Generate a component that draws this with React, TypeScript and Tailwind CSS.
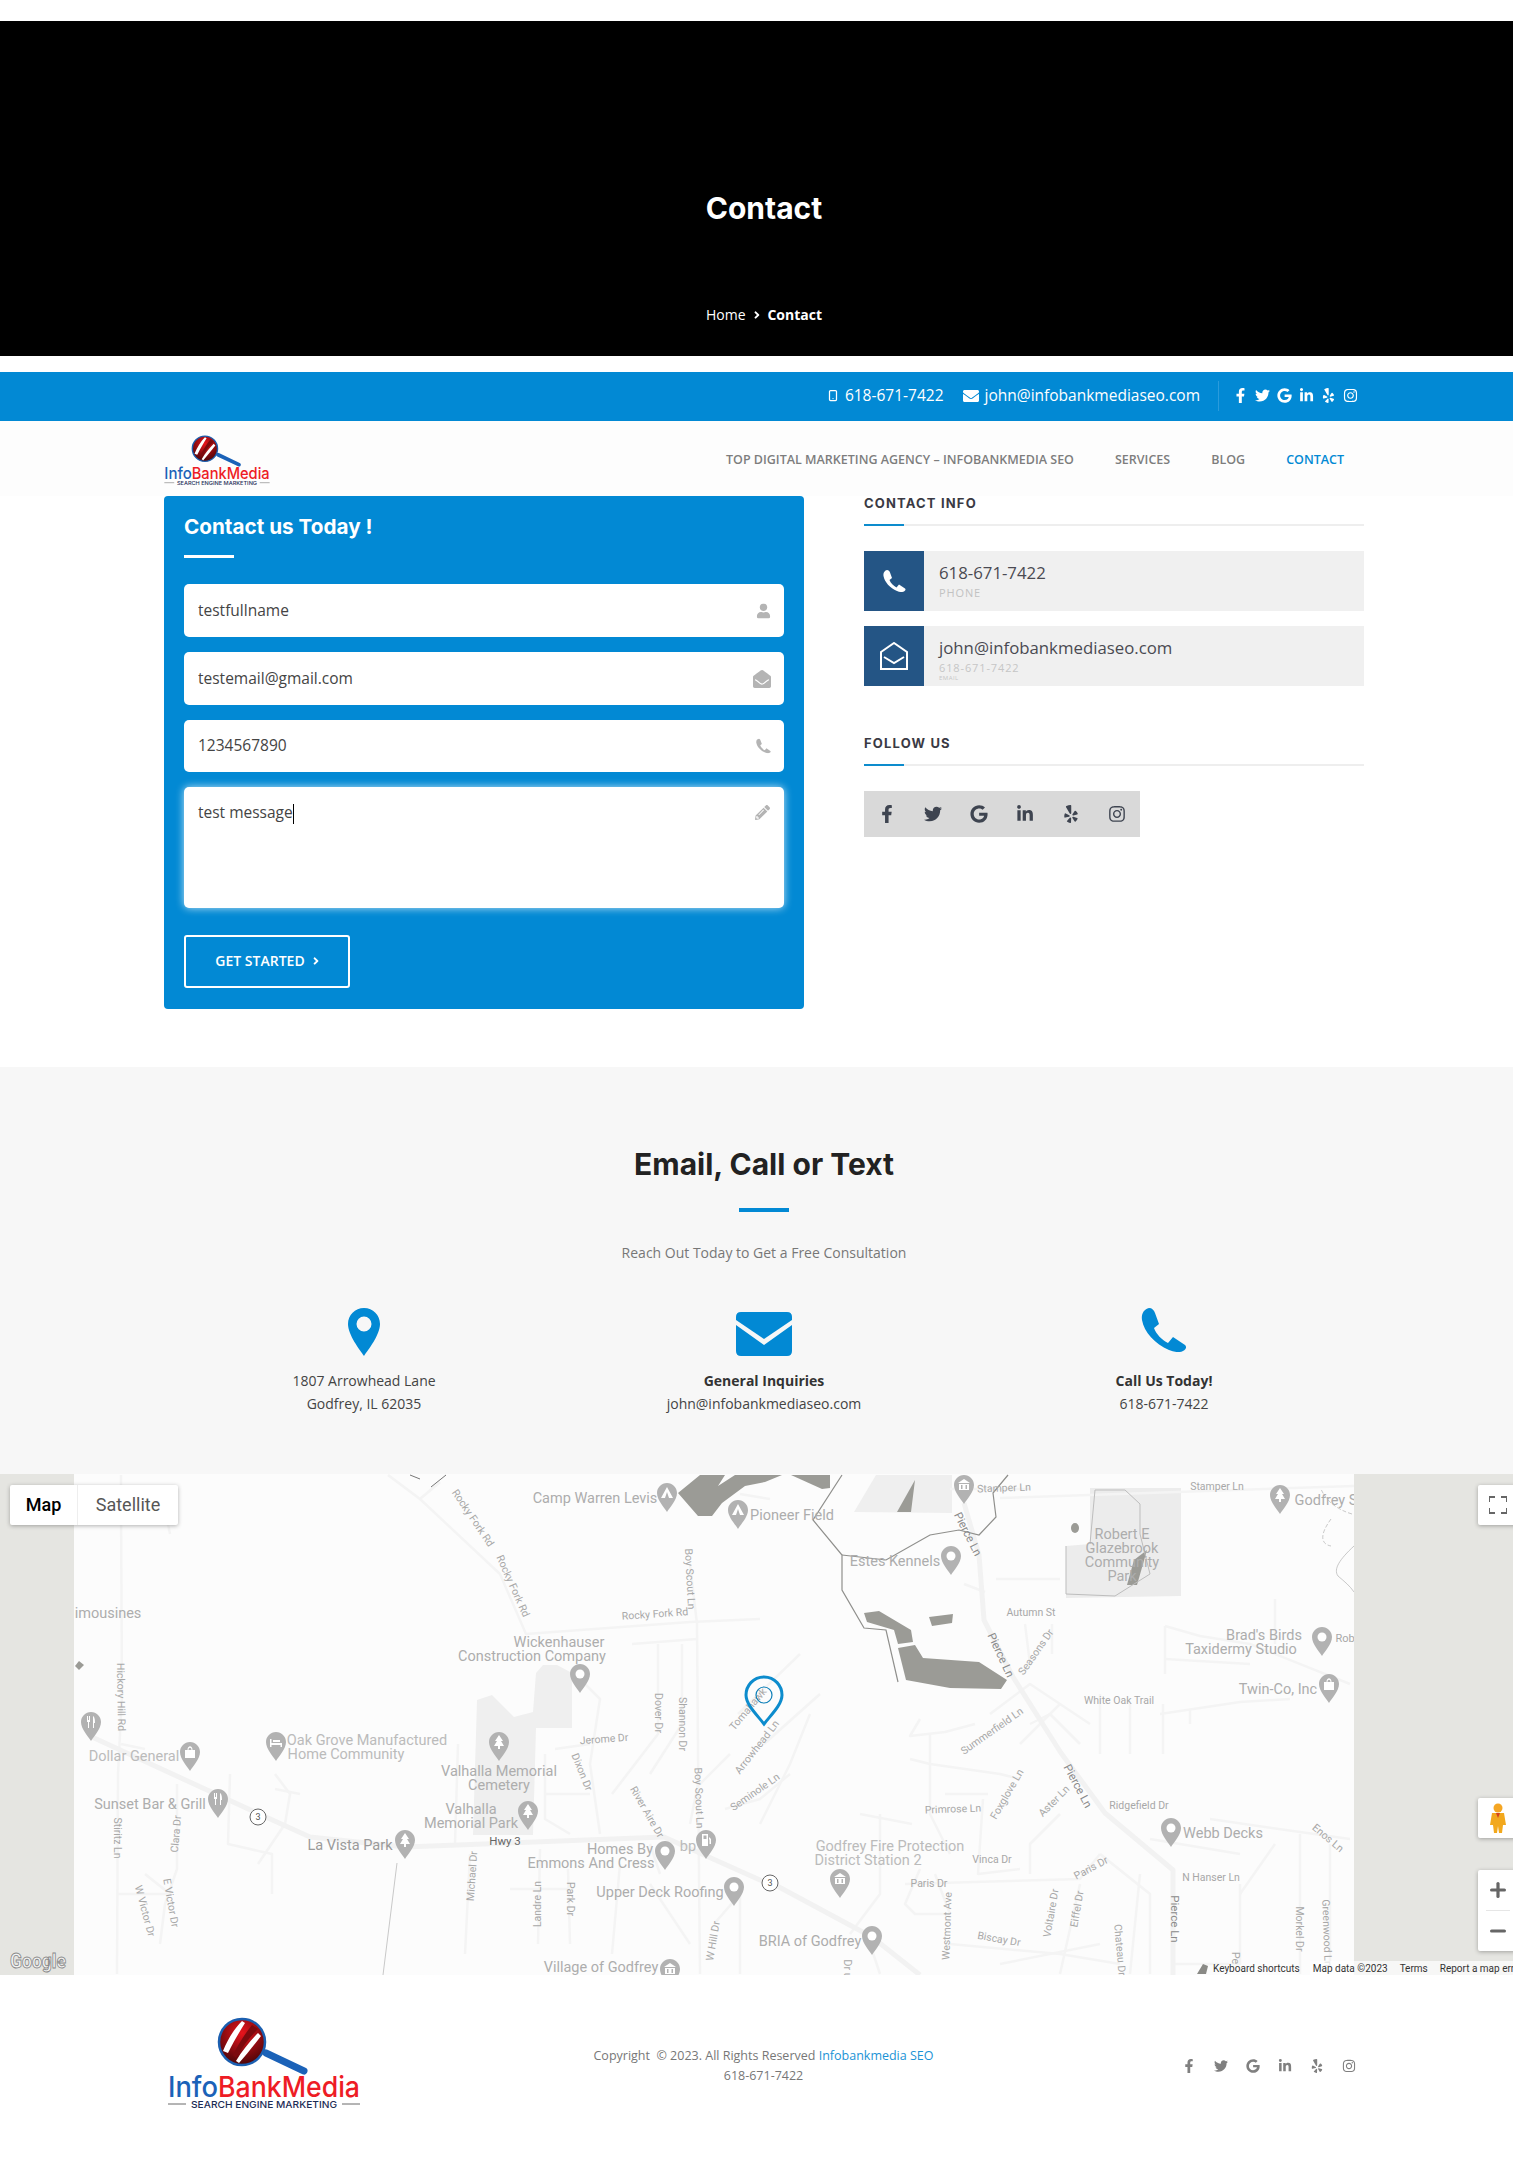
import { FaFacebookF, FaTwitter, FaGoogle, FaLinkedinIn, FaYelp, FaInstagram, FaEnvelope, FaUser, FaEnvelopeOpen, FaPencilAlt, FaAngleRight } from "react-icons/fa";
import { Smartphone, Plus, Minus } from "lucide-react";

const SOFT = { fontFamily: '"Open Sans", sans-serif' };
const HEAD = { fontFamily: 'Inter, sans-serif' };

function Handset({ className }: { className?: string }) {
  return (
    <svg viewBox="0 0 46 44" className={className} fill="currentColor">
      <path d="M8 0C11 0 13 2 14 5L18 16L13 20C15 26 21 32 27 35L32 29L44 37C46 39 45 41 42 43C38 45 33 44 28 42C14 36 3 24 1 12C0 6 3 1 8 0Z" />
    </svg>
  );
}

function Logo({ className, id }: { className?: string; id: string }) {
  return (
    <svg viewBox="0 0 192 93" className={className}>
      <defs>
        <radialGradient id={id} cx="50%" cy="30%" r="75%">
          <stop offset="0%" stopColor="#e8141c" />
          <stop offset="100%" stopColor="#3f0406" />
        </radialGradient>
      </defs>
      <line x1="98" y1="36" x2="136" y2="54" stroke="#1b62b8" strokeWidth="7" strokeLinecap="round" />
      <circle cx="74" cy="25" r="23" fill={`url(#${id})`} stroke="#1b5fb0" strokeWidth="2.5" />
      <path d="M55 34C60 22 66 12 74 4L77 6C72 14 66 24 60 36Z M68 44C74 34 82 24 90 16L93 19C86 28 78 38 71 46Z" fill="#fff" />
      <path d="M65 38C70 28 76 18 84 8L90 12C82 20 74 30 68 41Z" fill="#7c0a0e" />
      <text x="0" y="80" fontSize="29" fontFamily="Inter, sans-serif" fontWeight="500" fill="#1b62b8" textLength="50" lengthAdjust="spacingAndGlyphs">Info</text>
      <text x="50" y="80" fontSize="29" fontFamily="Inter, sans-serif" fontWeight="500" fill="#ee1c25" textLength="142" lengthAdjust="spacingAndGlyphs">BankMedia</text>
      <line x1="0" y1="87" x2="18" y2="87" stroke="#444" strokeWidth="0.8" />
      <line x1="174" y1="87" x2="192" y2="87" stroke="#444" strokeWidth="0.8" />
      <text x="23" y="91" fontSize="9.5" fontFamily="Inter, sans-serif" fontWeight="500" fill="#1c2c55" textLength="146" lengthAdjust="spacingAndGlyphs">SEARCH ENGINE MARKETING</text>
    </svg>
  );
}

const poi = "#adadad";
const st = "#a8a8a8";
type Lb = [string, number, number, number?, number?, string?];
const labels: Lb[] = [
  ["Camp Warren Levis", 595, 24, 0, 14.5, poi],
  ["Pioneer Field", 792, 41, 0, 14.5, poi],
  ["Rocky Fork Rd", 473, 44, 56, 10.5, st],
  ["Rocky Fork Rd", 513, 112, 66, 10.5, st],
  ["Boy Scout Ln", 690, 105, 87, 10.5, st],
  ["Rocky Fork Rd", 655, 140, -4, 10.5, st],
  ["Wickenhauser", 559, 168, 0, 14.5, poi],
  ["Construction Company", 532, 182, 0, 14.5, poi],
  ["Hickory Hill Rd", 121, 223, 89, 10.5, st],
  ["imousines", 108, 139, 0, 14.5, poi],
  ["Dover Dr", 658, 239, 90, 10.5, st],
  ["Shannon Dr", 682, 250, 90, 10.5, st],
  ["Jerome Dr", 604, 265, -4, 10.5, st],
  ["Dixon Dr", 582, 298, 68, 10.5, st],
  ["Oak Grove Manufactured", 367, 266, 0, 14.5, "#bbbbbb"],
  ["Home Community", 346, 280, 0, 14.5, "#bbbbbb"],
  ["Valhalla Memorial", 499, 297, 0, 14.5, poi],
  ["Cemetery", 499, 311, 0, 14.5, poi],
  ["Valhalla", 471, 335, 0, 14.5, poi],
  ["Memorial Park", 471, 349, 0, 14.5, poi],
  ["Dollar General", 134, 282, 0, 14.5, "#bbbbbb"],
  ["Sunset Bar & Grill", 150, 330, 0, 14.5, poi],
  ["La Vista Park", 350, 371, 0, 14.5, "#9a9a9a"],
  ["Hwy 3", 505, 367, 0, 11.5, "#666"],
  ["Homes By", 620, 375, 0, 14.5, poi],
  ["Emmons And Cress", 591, 389, 0, 14.5, poi],
  ["Upper Deck Roofing", 660, 418, 0, 14.5, poi],
  ["Village of Godfrey", 601, 493, 0, 14.5, poi],
  ["bp", 688, 372, 0, 14.5, "#bbbbbb"],
  ["Boy Scout Ln", 699, 324, 88, 10.5, st],
  ["River Aire Dr", 647, 338, 60, 10.5, st],
  ["Michael Dr", 472, 402, -86, 10.5, st],
  ["Landre Ln", 537, 430, -90, 10.5, st],
  ["Park Dr", 570, 425, 90, 10.5, st],
  ["Stiritz Ln", 117, 364, 90, 10.5, st],
  ["Clara Dr", 176, 360, -85, 10.5, st],
  ["W Victor Dr", 145, 437, 75, 10.5, st],
  ["E Victor Dr", 171, 429, 80, 10.5, st],
  ["W Hill Dr", 713, 467, -80, 10.5, st],
  ["Tomahawk", 748, 235, -50, 10.5, st],
  ["Arrowhead Ln", 757, 273, -52, 10.5, st],
  ["Seminole Ln", 755, 318, -35, 10.5, st],
  ["Stamper Ln", 1004, 14, -2, 10.5, st],
  ["Stamper Ln", 1217, 12, 0, 10.5, st],
  ["Pierce Ln", 968, 60, 63, 11.5, "#8a8a8a"],
  ["Estes Kennels", 895, 87, 0, 14.5, poi],
  ["Robert E", 1122, 60, 0, 14.5, poi],
  ["Glazebrook", 1122, 74, 0, 14.5, poi],
  ["Community", 1122, 88, 0, 14.5, poi],
  ["Park", 1122, 102, 0, 14.5, poi],
  ["Godfrey S", 1326, 26, 0, 14.5, poi],
  ["Autumn St", 1031, 138, 0, 10.5, st],
  ["Seasons Dr", 1036, 178, -55, 10.5, st],
  ["Pierce Ln", 1001, 181, 65, 11.5, "#8a8a8a"],
  ["Brad's Birds", 1264, 161, 0, 14.5, poi],
  ["Taxidermy Studio", 1241, 175, 0, 14.5, poi],
  ["Rob", 1345, 164, 0, 11, st],
  ["Twin-Co, Inc", 1278, 215, 0, 14.5, poi],
  ["White Oak Trail", 1119, 226, 0, 10.5, st],
  ["Summerfield Ln", 992, 257, -35, 10.5, st],
  ["Pierce Ln", 1078, 312, 62, 11.5, "#8a8a8a"],
  ["Ridgefield Dr", 1139, 331, 0, 10.5, st],
  ["Primrose Ln", 953, 335, -2, 10.5, st],
  ["Foxglove Ln", 1007, 320, -60, 10.5, st],
  ["Aster Ln", 1054, 327, -45, 10.5, st],
  ["Webb Decks", 1223, 359, 0, 14.5, poi],
  ["Enos Ln", 1328, 364, 40, 10.5, st],
  ["Godfrey Fire Protection", 890, 372, 0, 14.5, "#bbbbbb"],
  ["District Station 2", 868, 386, 0, 14.5, "#bbbbbb"],
  ["Vinca Dr", 992, 385, 0, 10.5, st],
  ["Paris Dr", 929, 409, 0, 10.5, st],
  ["Paris Dr", 1091, 394, -28, 10.5, st],
  ["N Hanser Ln", 1211, 403, 0, 10.5, st],
  ["Pierce Ln", 1175, 445, 90, 11.5, "#8a8a8a"],
  ["Westmont Ave", 947, 452, -88, 10.5, st],
  ["Voltaire Dr", 1051, 439, -80, 10.5, st],
  ["Eiffel Dr", 1077, 435, -80, 10.5, st],
  ["Chateau Dr", 1120, 476, 85, 10.5, st],
  ["Biscay Dr", 999, 465, 10, 10.5, st],
  ["BRIA of Godfrey", 810, 467, 0, 14.5, poi],
  ["Morkel Dr", 1299, 455, 90, 10.5, st],
  ["Greenwood Ln", 1327, 459, 88, 10.5, st],
  ["Pe", 1235, 484, 90, 10.5, st],
  ["Dr u", 847, 495, 90, 10.5, st],
];

type Kind = "dot" | "tent" | "tree" | "fork" | "bag" | "bld" | "gas" | "bed";
const pins: [number, number, Kind][] = [
  [667, 9, "tent"], [738, 26, "tent"], [580, 190, "dot"], [91, 238, "fork"], [190, 268, "bag"], [218, 315, "fork"], [276, 258, "bed"], [499, 258, "tree"], [528, 327, "tree"], [405, 356, "tree"], [665, 367, "dot"], [706, 356, "gas"], [734, 403, "dot"], [670, 485, "bld"], [964, 1, "bld"], [1280, 11, "tree"], [951, 72, "dot"], [1322, 153, "dot"], [1329, 200, "bag"], [1171, 344, "dot"], [840, 395, "bld"], [872, 452, "dot"],
];

function Glyph({ kind }: { kind: Kind }) {
  const w = "#ffffff";
  if (kind === "dot") return <circle cx="10" cy="10" r="4.5" fill={w} />;
  if (kind === "tent") return <path d="M10 4L16 15H4ZM10 9L8 15H12Z" fill={w} fillRule="evenodd" />;
  if (kind === "tree") return <path d="M10 3L14 9H12L15 14H11V17H9V14H5L8 9H6Z" fill={w} />;
  if (kind === "fork") return <path d="M6 4H7V8H8V4H9V10H8V16H7V10H6ZM12 4C14 5 14 9 14 11H13V16H12Z" fill={w} />;
  if (kind === "bag") return <path d="M5 8H15V16H5ZM7.5 8C7.5 3 12.5 3 12.5 8H11.5C11.5 5 8.5 5 8.5 8Z" fill={w} />;
  if (kind === "bld") return <path d="M10 4L16 8H4ZM5 9H15V15H5ZM7 10V14H8.5V10ZM11.5 10V14H13V10Z" fill={w} fillRule="evenodd" />;
  if (kind === "gas") return <path d="M6 4H12V16H6ZM7.5 5.5V9H10.5V5.5ZM13 7L15 9V14H13.5V10L13 9Z" fill={w} fillRule="evenodd" />;
  return <path d="M4 7H5.5V11H16V15H14.5V13H5.5V15H4ZM7 8H14V10H7Z" fill={w} />;
}

const roadsMain = [
  "92,263 257,339 310,363 405,373 664,363 760,406 779,413 872,463 920,501",
  "964,29 979,81 984,146 1013,203 1061,279 1105,339 1173,396 1173,501",
];
const roads = [
  "121,1 121,30 122,220 118,300 117,500",
  "125,30 165,35 170,60",
  "121,270 145,275",
  "388,1 420,25 440,8",
  "420,25 500,100 526,160 690,148 760,145",
  "690,90 697,150 699,400 700,500",
  "632,170 697,165",
  "658,170 658,260 612,320",
  "682,170 682,250 650,300",
  "585,210 600,225 590,290 600,360",
  "555,275 590,270",
  "545,280 545,345 570,360",
  "545,320 590,320",
  "230,300 228,370 272,380 272,420",
  "177,310 177,395 165,430 160,470",
  "117,420 170,420 145,400",
  "275,300 290,320 285,350 258,390",
  "275,315 300,320",
  "458,270 455,370",
  "470,380 465,480",
  "510,415 570,415",
  "540,375 538,470",
  "568,395 570,470",
  "620,390 612,480",
  "650,370 660,400",
  "730,280 700,310",
  "700,300 690,350",
  "725,335 760,325 790,300",
  "738,240 800,180",
  "764,270 820,220",
  "810,240 790,290 760,350",
  "714,450 740,420 740,500",
  "650,410 690,470",
  "996,105 1060,105",
  "1025,150 1030,190",
  "1052,150 1052,180",
  "990,240 1030,210 1060,230 1020,270",
  "1030,250 1050,240 1080,270",
  "1060,230 1090,250",
  "1165,152 1165,200",
  "1165,152 1200,162 1250,170 1350,210",
  "1165,185 1250,190",
  "1275,125 1275,170",
  "1160,240 1240,228 1290,225",
  "1100,220 1100,280",
  "1130,230 1130,280",
  "1163,230 1163,280",
  "1190,235 1190,250",
  "920,245 910,262 945,258 975,250",
  "930,260 930,340 950,380",
  "910,285 930,290 1000,300 1020,305",
  "912,350 860,340",
  "945,320 988,320",
  "983,325 978,400 1020,395",
  "1060,340 1030,370 1030,400",
  "880,340 880,420 850,460",
  "920,395 905,430 915,440 950,440 935,400",
  "905,410 1080,405 1100,380",
  "1080,410 1060,500",
  "1140,400 1130,500",
  "1100,380 1150,420 1150,500",
  "950,470 1060,480 1120,490",
  "1000,490 1100,470",
  "1210,345 1300,358 1350,365",
  "1275,370 1240,420",
  "1300,360 1300,500",
  "1330,370 1330,500",
  "1240,410 1240,490 1175,490",
  "1150,365 1240,380",
  "870,470 880,500",
  "740,20 770,25",
  "964,110 985,118",
  "1000,24 1354,12",
  "950,15 1030,15",
];
const slivers = [
  "678,19 700,1 725,1 718,12 735,1 782,1 765,8 745,12 722,29 712,42 698,42",
  "791,1 830,1 830,14 822,15",
  "915,6 911,38 897,38",
  "1147,76 1137,111 1127,111 1134,86",
  "864,139 879,137 911,156 913,168 898,170 894,156 867,148",
  "898,174 915,171 923,184 979,188 1007,206 1001,215 950,214 906,206",
  "929,143 953,140 952,149 932,152",
  "79,187 84,191 79,196 75,192",
];

function MapDrawing() {
  return (
    <svg viewBox="0 0 1513 501" className="block w-full h-[501px]" style={{ fontFamily: "Roboto, sans-serif" }}>
      <rect width="1513" height="501" fill="#fcfcfc" />
      <polygon points="473,361 477,226 492,221 514,243 533,238 536,199 543,191 557,191 572,199 572,254 536,254 533,361" fill="#efefef" />
      <polygon points="876,1 952,1 952,39 854,38" fill="#efefef" />
      <polygon points="1090,14 1181,14 1181,122 1066,124 1066,72 1090,70" fill="#ececec" />
      {roads.map((p, i) => (
        <polyline key={i} points={p} fill="none" stroke="#f4f4f4" strokeWidth="2.5" strokeLinejoin="round" />
      ))}
      {roadsMain.map((p, i) => (
        <polyline key={i} points={p} fill="none" stroke="#f2f2f2" strokeWidth="5" strokeLinejoin="round" />
      ))}
      {slivers.map((p, i) => (
        <polygon key={i} points={p} fill="#9b9b96" />
      ))}
      <ellipse cx="1075" cy="54" rx="4" ry="5" fill="#9b9b96" />
      <polyline points="842,1 813,46 842,81 842,116 864,154 886,156 898,208" fill="none" stroke="#8f8f8c" strokeWidth="1.2" />
      <polyline points="842,81 886,86 930,61 959,56 979,61 996,43 993,19 1008,1" fill="none" stroke="#8f8f8c" strokeWidth="1.2" />
      <polyline points="1066,72 1066,120 1115,122 1150,100 1140,60 1140,30 1125,16 1095,16 1090,70" fill="none" stroke="#bdbdbd" strokeWidth="1" />
      <polyline points="397,389 383,501" fill="none" stroke="#c8c8c8" strokeWidth="1" />
      <polyline points="410,1 420,5" fill="none" stroke="#777" strokeWidth="1" />
      <polyline points="446,1 431,13" fill="none" stroke="#777" strokeWidth="1" />
      <path d="M1331 45C1320 60 1320 70 1331 72M1352 40C1335 35 1325 25 1321 15" fill="none" stroke="#bbb" strokeWidth="0.8" strokeDasharray="4 2" />
      <path d="M1354 72C1340 85 1333 95 1338 102C1345 108 1350 112 1354 118" fill="none" stroke="#bbb" strokeWidth="0.8" />
      {labels.map(([t, x, y, r = 0, s = 10.5, c = st], i) => (
        <text key={i} x={x} y={y} fontSize={s} fill={c} textAnchor="middle" dominantBaseline="central" transform={r ? `rotate(${r} ${x} ${y})` : undefined}>
          {t}
        </text>
      ))}
      {pins.map(([x, y, kind], i) => (
        <g key={i} transform={`translate(${x - 10} ${y})`}>
          <path d="M10 0C4.5 0 0 4.5 0 10C0 17 7 24 10 29C13 24 20 17 20 10C20 4.5 15.5 0 10 0Z" fill="#b2b2b2" />
          <Glyph kind={kind} />
        </g>
      ))}
      {[[258, 343], [770, 409]].map(([x, y], i) => (
        <g key={i}>
          <circle cx={x} cy={y} r="8" fill="#fff" stroke="#666" strokeWidth="1" />
          <text x={x} y={y} fontSize="9" textAnchor="middle" dominantBaseline="central" fill="#555">3</text>
        </g>
      ))}
      <path d="M764 203C753 203 746 212 746 221C746 231 758 242 764 250C770 242 782 231 782 221C782 212 775 203 764 203Z" fill="none" stroke="#0d8ccd" strokeWidth="3" />
      <circle cx="764" cy="221" r="8" fill="none" stroke="#0d7fb8" strokeWidth="1.2" />
      <rect x="0" width="74" height="501" fill="#e5e5e1" />
      <rect x="1354" width="159" height="501" fill="#e5e5e1" />
      <text x="10" y="494" fontSize="20" fontWeight="700" fill="#f4f4f4" stroke="#8a8a8a" strokeWidth="0.9" textLength="56" lengthAdjust="spacingAndGlyphs">Google</text>
      <path d="M1197 500L1203 490L1208 492L1206 500Z" fill="#8a8a86" />
    </svg>
  );
}

function Social({ className }: { className: string }) {
  return (
    <>
      <FaFacebookF className={className} />
      <FaTwitter className={className} />
      <FaGoogle className={className} />
      <FaLinkedinIn className={className} />
      <FaYelp className={className} />
      <FaInstagram className={className} />
    </>
  );
}

function Field({ value, icon, h = "h-[53px]" }: { value: string; icon: React.ReactNode; h?: string }) {
  return (
    <div className={`relative ${h} bg-white rounded-[5px]`}>
      <input readOnly value={value} className="w-full h-full bg-transparent pl-[14px] pr-10 pb-[2px] text-[15.5px] text-[#444] outline-none" style={SOFT} />
      <span className="absolute right-[13px] top-1/2 -translate-y-1/2 text-[#b4b4b4]">{icon}</span>
    </div>
  );
}

function Heading({ children }: { children: string }) {
  return (
    <div>
      <h4 className="text-[13px] font-bold tracking-[0.09em] text-[#3a3a44] uppercase leading-[20px]" style={HEAD}>{children}</h4>
      <div className="mt-[11px] h-[2px] bg-[#eeeeee]">
        <div className="w-10 h-[2px] bg-[#0d8ccd]" />
      </div>
    </div>
  );
}

export default function App() {
  return (
    <div className="w-full h-[2157px] bg-white overflow-hidden" style={SOFT}>
      <div className="h-[21px]" />
      <section className="h-[335px] bg-black flex flex-col items-center pl-[15px] pt-[169px] text-white">
        <h1 className="text-[30px] leading-[36px] font-bold" style={HEAD}>Contact</h1>
        <div className="mt-[79px] flex items-center text-[14px] leading-[20px] w-[116px] whitespace-nowrap">
          <span>Home</span>
          <FaAngleRight className="mx-[7px] text-[12px]" />
          <span className="font-bold">Contact</span>
        </div>
      </section>
      <div className="h-[16px]" />
      <div className="h-[49px] bg-[#0289d4] flex items-center justify-end pr-[155px] pb-[2px] text-white text-[15.5px]">
        <Smartphone className="w-[12px] h-[17px] mr-[6px]" strokeWidth={2.5} />
        <span>618-671-7422</span>
        <FaEnvelope className="ml-[19px] mr-[6px] text-[16px]" />
        <span>john@infobankmediaseo.com</span>
        <div className="w-px h-[30px] bg-[#2a9bdc] ml-[18px] mr-[14px]" />
        <div className="flex items-center gap-[7px]">
          <Social className="text-[15px] text-white" />
        </div>
      </div>
      <header className="h-[75px] flex items-center pl-[164px] pr-[169px] bg-[#fdfdfd]">
        <Logo id="lens-a" className="w-[106px] h-[51px] mt-[4px]" />
        <nav className="ml-auto pt-[4px] flex items-center gap-[41px] text-[12.5px] font-semibold text-[#7d7d7d] whitespace-nowrap">
          <span>TOP DIGITAL MARKETING AGENCY – INFOBANKMEDIA SEO</span>
          <span>SERVICES</span>
          <span>BLOG</span>
          <span className="text-[#0289d4]">CONTACT</span>
        </nav>
      </header>
      <section className="flex items-start gap-[60px] pl-[164px] h-[571px]">
        <form className="w-[640px] h-[513px] bg-[#0289d4] rounded-[4px] px-5 pt-[17px]">
          <h3 className="text-[20.7px] leading-[28px] font-bold text-white" style={HEAD}>Contact us Today !</h3>
          <div className="w-[50px] h-[3px] bg-white mt-[14px] mb-[26px]" />
          <div className="flex flex-col gap-[15px]">
            <Field value="testfullname" icon={<FaUser className="text-[15px]" />} />
            <Field value="testemail@gmail.com" icon={<FaEnvelopeOpen className="text-[18px]" />} />
            <Field value="1234567890" h="h-[52px]" icon={<Handset className="w-[15px] h-[15px]" />} />
            <div className="relative h-[121px] bg-white rounded-[5px] shadow-[0_0_9px_rgba(255,255,255,0.75)] pl-[14px] pt-[13px] text-[15.5px] leading-[24px] text-[#444]">
              test message<span className="inline-block w-px h-[20px] bg-black align-middle" />
              <FaPencilAlt className="absolute right-[14px] top-[18px] text-[15px] text-[#b4b4b4]" />
            </div>
          </div>
          <div className="mt-[27px] w-[166px] h-[53px] border-2 border-white rounded-[3px] flex items-center justify-center gap-[5px] pl-[3px] pb-[2px] text-white text-[14px] font-semibold">
            GET STARTED <FaAngleRight className="text-[12px]" />
          </div>
        </form>
        <aside className="w-[500px] -mt-[3px]">
          <Heading>CONTACT INFO</Heading>
          <div className="mt-[25px] flex flex-col gap-[15px]">
            <div className="h-[60px] flex bg-[#f0f0f0]">
              <div className="w-[60px] bg-[#245585] flex items-center justify-center text-white">
                <Handset className="w-[23px] h-[22px]" />
              </div>
              <div className="pl-[15px] pt-[9px]">
                <div className="text-[16.8px] leading-[26px] text-[#4a4a52]">618-671-7422</div>
                <div className="text-[11px] leading-[13px] tracking-[0.08em] text-[#c2c2c2]">PHONE</div>
              </div>
            </div>
            <div className="h-[60px] flex bg-[#f0f0f0] overflow-hidden">
              <div className="w-[60px] bg-[#245585] flex items-center justify-center text-white">
                <svg viewBox="0 0 28 28" className="w-[28px] h-[28px]" fill="none" stroke="currentColor" strokeWidth="2">
                  <path d="M1 10L14 1L27 10V27H1Z" />
                  <path d="M4 15L14 21L24 15" />
                </svg>
              </div>
              <div className="pl-[15px] pt-[9px]">
                <div className="text-[16.8px] leading-[26px] text-[#4a4a52]">john@infobankmediaseo.com</div>
                <div className="text-[11px] leading-[13px] tracking-[0.08em] text-[#c6c6c6]">618-671-7422</div>
                <div className="text-[6px] leading-[8px] tracking-[0.08em] text-[#c6c6c6]">EMAIL</div>
              </div>
            </div>
          </div>
          <div className="mt-[47px]">
            <Heading>FOLLOW US</Heading>
          </div>
          <div className="mt-[25px] w-[276px] h-[46px] bg-[#d9d9d9] grid grid-cols-6 place-items-center text-[#3e4450]">
            <Social className="text-[18px]" />
          </div>
        </aside>
      </section>
      <section className="h-[407px] bg-[#f7f7f7] pt-[77px] text-center">
        <div className="pl-[15px]">
          <h2 className="text-[30px] leading-[40px] font-bold text-[#222]" style={HEAD}>Email, Call or Text</h2>
          <div className="mx-auto mt-[24px] w-[50px] h-[4px] bg-[#0289d4]" />
          <p className="mt-[31px] text-[14px] leading-[20px] text-[#777]">Reach Out Today to Get a Free Consultation</p>
        </div>
        <div className="mt-[45px] ml-[164px] w-[1200px] grid grid-cols-3 text-[14px] leading-[23px] text-[#444]">
          <div className="flex flex-col items-center">
            <div className="h-[61px]">
              <svg viewBox="0 0 32 48" className="w-[32px] h-[48px]" fill="#0289d4" fillRule="evenodd">
                <path d="M16 0C7 0 0 7 0 16C0 27 12 42 16 48C20 42 32 27 32 16C32 7 25 0 16 0ZM16 8.5A7.5 7.5 0 1 1 16 23.5A7.5 7.5 0 1 1 16 8.5Z" />
              </svg>
            </div>
            <div>1807 Arrowhead Lane</div>
            <div>Godfrey, IL 62035</div>
          </div>
          <div className="flex flex-col items-center">
            <div className="h-[61px] pt-[4px]">
              <svg viewBox="0 0 56 44" className="w-[56px] h-[44px]" fill="#0289d4">
                <path d="M5 0H51Q56 0 56 5V8L28 27L0 8V5Q0 0 5 0Z" />
                <path d="M0 13L28 33L56 13V39Q56 44 51 44H5Q0 44 0 39Z" />
              </svg>
            </div>
            <div className="font-bold text-[#333]">General Inquiries</div>
            <div>john@infobankmediaseo.com</div>
          </div>
          <div className="flex flex-col items-center">
            <div className="h-[61px]">
              <Handset className="w-[46px] h-[44px] text-[#0289d4]" />
            </div>
            <div className="font-bold text-[#333]">Call Us Today!</div>
            <div>618-671-7422</div>
          </div>
        </div>
      </section>
      <section className="relative h-[501px] overflow-hidden">
        <MapDrawing />
        <div className="absolute left-[10px] top-[11px] h-10 flex bg-white shadow-[0_1px_4px_rgba(0,0,0,0.3)] rounded-[2px] text-[18px] leading-10 text-center" style={{ fontFamily: "Roboto, sans-serif" }}>
          <span className="w-[68px] font-medium text-black border-r border-[#eee]">Map</span>
          <span className="w-[100px] text-[#565656]">Satellite</span>
        </div>
        <div className="absolute left-[1478px] top-[11px] w-10 h-10 bg-white shadow-[0_1px_4px_rgba(0,0,0,0.3)] rounded-[2px] flex items-center pl-[11px]">
          <svg viewBox="0 0 18 18" className="w-[18px] h-[18px]" fill="none" stroke="#666" strokeWidth="2"><path d="M0 6V1H6M12 1H18V6M18 12V17H12M6 17H0V12" /></svg>
        </div>
        <div className="absolute left-[1478px] top-[324px] w-10 h-10 bg-white shadow-[0_1px_4px_rgba(0,0,0,0.3)] rounded-[2px] flex items-center pl-[11px]">
          <svg viewBox="0 0 18 30" className="w-[18px] h-[30px]"><circle cx="9" cy="5" r="4.5" fill="#f5a623" /><path d="M3 10H15L17 22L14 22L13 30H10L9 23L8 30H5L4 22L1 22Z" fill="#f2a81d" /><path d="M7 10L9 15L11 10Z" fill="#d5411d" /></svg>
        </div>
        <div className="absolute left-[1478px] top-[396px] w-10 h-[81px] bg-white shadow-[0_1px_4px_rgba(0,0,0,0.3)] rounded-[2px] flex flex-col text-[#666]">
          <div className="h-10 flex items-center pl-[9px]"><Plus className="w-[22px] h-[22px]" strokeWidth={3.5} /></div>
          <div className="mx-[8px] h-px bg-[#e6e6e6]" />
          <div className="h-10 flex items-center pl-[9px]"><Minus className="w-[22px] h-[22px]" strokeWidth={3.5} /></div>
        </div>
        <div className="absolute left-[1203px] bottom-0 h-[14px] w-[310px] flex items-center whitespace-nowrap overflow-hidden text-[10px] text-[#333]" style={{ fontFamily: "Roboto, sans-serif" }}>
          <span className="px-[10px]">Keyboard shortcuts</span>
          <span className="bg-white/70 flex h-full items-center">
            <span className="pl-[3px] pr-[6px]">Map data ©2023</span>
            <span className="px-[6px]">Terms</span>
            <span className="px-[6px]">Report a map error</span>
          </span>
        </div>
      </section>
      <footer className="h-[182px] flex items-center pl-[168px]">
        <Logo id="lens-b" className="w-[192px] h-[93px] -mt-[5px]" />
        <div className="ml-[232px] w-[343px] text-center text-[12.5px] leading-[20px] text-[#777] whitespace-nowrap">
          Copyright&nbsp; © 2023. All Rights Reserved <span className="text-[#1a93d6]">Infobankmedia SEO</span>
          <div>618-671-7422</div>
        </div>
        <div className="ml-[247px] flex items-center gap-[18px]">
          <Social className="text-[14px] text-[#808080]" />
        </div>
      </footer>
    </div>
  );
}
